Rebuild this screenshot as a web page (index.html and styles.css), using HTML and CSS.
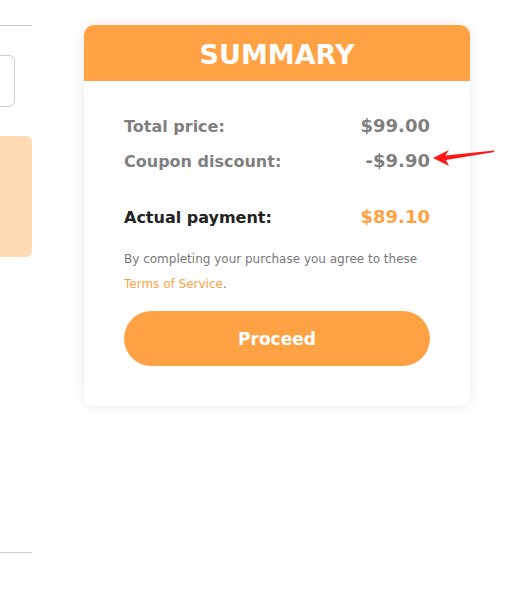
FILE: index.html
```html
<!DOCTYPE html>
<html>
<head>
<meta charset="utf-8">
<link rel="stylesheet" href="styles.css">
</head>
<body>
<div class="page">
  <aside class="side">
    <div class="side-line"></div>
    <div class="side-input"></div>
    <div class="side-note"></div>
    <div class="side-spacer"></div>
    <div class="side-line"></div>
  </aside>
  <section class="card">
    <header class="card-head">SUMMARY</header>
    <div class="card-body">
      <div class="row muted"><span>Total price:</span><span class="value">$99.00</span></div>
      <div class="row muted coupon"><span>Coupon discount:</span><span class="value amount">-$9.90
        <svg class="arrow" width="62" height="20" viewBox="0 0 62 20"><path d="M0 10 L16 2 L12.5 7.5 L61 2.5 L61.5 4 L13 12 L16 18 Z" fill="#ff1a1a"/></svg></span></div>
      <div class="row total"><span>Actual payment:</span><span class="value orange">$89.10</span></div>
      <p class="terms">By completing your purchase you agree to these <a class="link">Terms of Service</a>.</p>
      <button class="proceed">Proceed</button>
    </div>
  </section>
</div>
</body>
</html>
```
FILE: styles.css
```css
* { box-sizing: border-box; }
html, body { margin: 0; padding: 0; background: #fff; }
body { font-family: "DejaVu Sans", "Open Sans", sans-serif; width: 519px; height: 591px; overflow: hidden; }
.page { display: flex; gap: 52px; padding-top: 25px; }
.side { width: 32px; display: flex; flex-direction: column; }
.side-line { height: 1px; background: #cfcfcf; width: 32px; }
.side-input { margin-top: 29px; width: 15px; height: 52px; border: 1px solid #cfcfcf; border-left: none; border-radius: 0 6px 6px 0; }
.side-note { margin-top: 29px; height: 121px; background: #ffdab3; border-radius: 0 6px 6px 0; }
.side-spacer { height: 295px; }
.card { width: 386px; height: 381px; border-radius: 10px; background: #fff; box-shadow: 0 0 14px rgba(0,0,0,0.09); }
.card-head { height: 56px; padding-top: 2px; background: #ffa243; color: #fff; border-radius: 10px 10px 0 0; font-weight: bold; font-size: 27px; display: flex; align-items: center; justify-content: center; }
.card-body { padding: 35px 40px 0 40px; }
.row { display: flex; justify-content: space-between; align-items: baseline; font-weight: bold; font-size: 16px; line-height: 20px; }
.value { font-size: 18px; }
.muted { color: #7f7f7f; }
.coupon { margin-top: 14px; }
.amount { position: relative; }
.arrow { position: absolute; left: calc(100% + 3px); top: -3px; }
.total { margin-top: 35px; color: #222; }
.orange { color: #ffa243; }
.terms { margin: 19px 0 0 0; font-size: 12px; line-height: 25px; color: #777; }
.link { color: #ffa243; }
.proceed { margin-top: 14px; width: 306px; height: 55px; border: none; border-radius: 28px; background: #ffa243; color: #fff; font-family: inherit; font-weight: bold; font-size: 17px; display: block; }
```
